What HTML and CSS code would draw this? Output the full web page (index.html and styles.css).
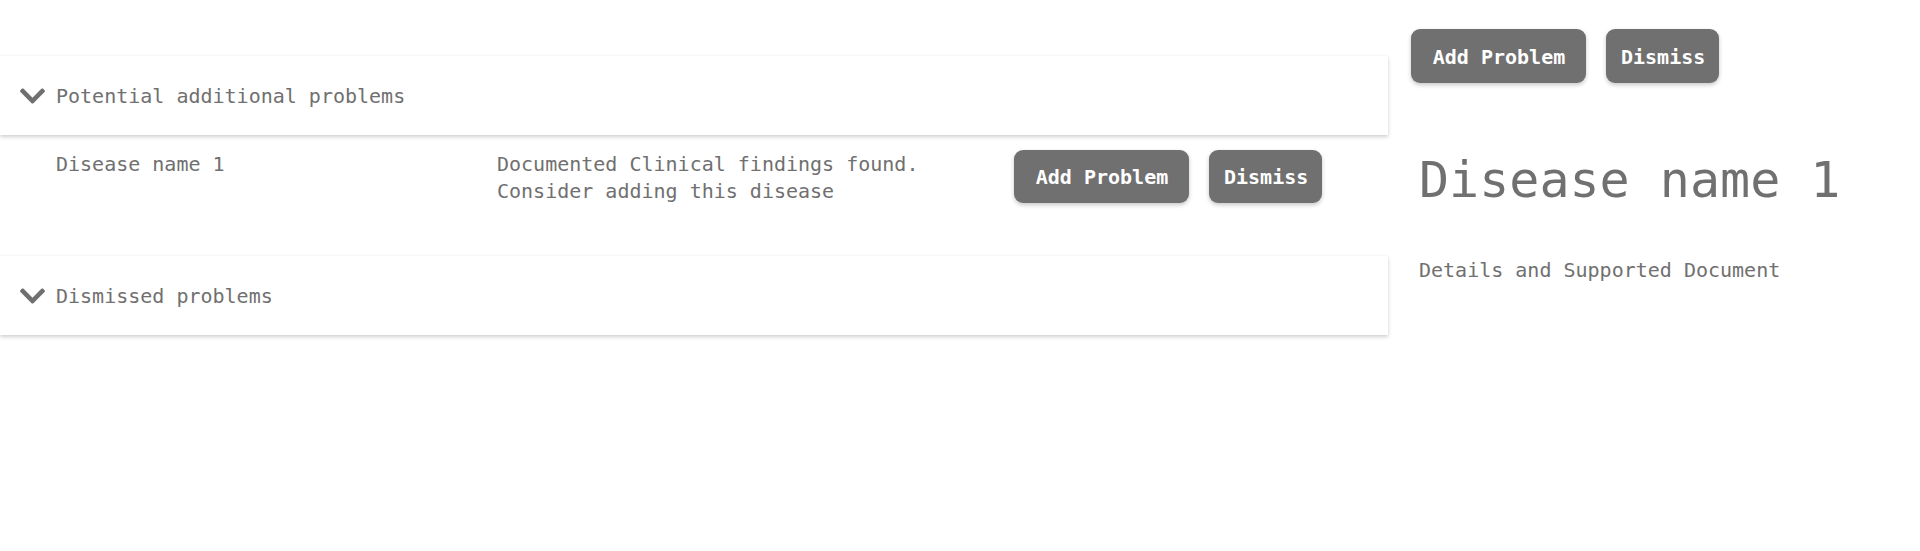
FILE: index.html
```html
<!DOCTYPE html>
<html lang="en">
<head>
<meta charset="utf-8">
<title>Problems</title>
<link rel="stylesheet" href="styles.css">
</head>
<body>
<div class="page">
  <main class="list">
    <section class="panel">
      <svg class="chev" viewBox="5 125 438 262" aria-hidden="true"><path d="M207.029 381.476L12.686 187.132c-9.373-9.373-9.373-24.569 0-33.941l22.667-22.667c9.357-9.357 24.522-9.375 33.901-.04L224 284.505l154.745-154.021c9.379-9.335 24.544-9.317 33.901.04l22.667 22.667c9.373 9.373 9.373 24.569 0 33.941L240.971 381.476c-9.373 9.372-24.569 9.372-33.942 0z"/></svg>
      <span class="panel-title">Potential additional problems</span>
    </section>
    <div class="row">
      <div class="row-name">Disease name 1</div>
      <div class="row-desc">Documented Clinical findings found.<br>Consider adding this disease</div>
      <div class="actions">
        <button class="btn btn-add">Add Problem</button>
        <button class="btn">Dismiss</button>
      </div>
    </div>
    <section class="panel">
      <svg class="chev" viewBox="5 125 438 262" aria-hidden="true"><path d="M207.029 381.476L12.686 187.132c-9.373-9.373-9.373-24.569 0-33.941l22.667-22.667c9.357-9.357 24.522-9.375 33.901-.04L224 284.505l154.745-154.021c9.379-9.335 24.544-9.317 33.901.04l22.667 22.667c9.373 9.373 9.373 24.569 0 33.941L240.971 381.476c-9.373 9.372-24.569 9.372-33.942 0z"/></svg>
      <span class="panel-title">Dismissed problems</span>
    </section>
  </main>
  <aside class="detail">
    <div class="actions">
      <button class="btn btn-add">Add Problem</button>
      <button class="btn">Dismiss</button>
    </div>
    <h1 class="detail-title">Disease name 1</h1>
    <p class="detail-text">Details and Supported Document</p>
  </aside>
</div>
</body>
</html>
```

FILE: styles.css
```css
html, body {
  margin: 0;
  padding: 0;
  background: #ffffff;
}

body {
  font-family: "DejaVu Sans Mono", "Liberation Mono", monospace;
  font-size: 20px;
  line-height: 27px;
  color: #707070;
}

.page {
  display: flex;
  align-items: flex-start;
}

.list {
  width: 1388px;
  flex: none;
  padding-top: 56px;
  padding-bottom: 20px;
}

.panel {
  position: relative;
  height: 79px;
  display: flex;
  align-items: center;
  gap: 11px;
  padding-left: 20px;
  padding-top: 1px;
  box-sizing: border-box;
  background: #ffffff;
  box-shadow: 0 2px 4px rgba(0, 0, 0, 0.18), 0 0 3px rgba(0, 0, 0, 0.04);
}

.chev {
  width: 25px;
  height: 16px;
  fill: #707070;
  flex: none;
  margin-top: -1px;
}

.panel-title {
  color: #707070;
}

.row {
  display: flex;
  align-items: flex-start;
  height: 121px;
  box-sizing: border-box;
  padding: 16px 0 0 56px;
}

.row-name {
  width: 441px;
  flex: none;
}

.row-desc {
  width: 517px;
  flex: none;
}

.actions {
  display: flex;
  gap: 20px;
}

.row .actions {
  margin-top: -1px;
}

.btn {
  height: 53px;
  padding: 1px 14px 0 15px;
  border: none;
  border-radius: 9px;
  background: #707070;
  color: #ffffff;
  font-family: "DejaVu Sans Mono", "Liberation Mono", monospace;
  font-size: 20px;
  font-weight: bold;
  box-shadow: 0 2px 4px rgba(0, 0, 0, 0.22);
  cursor: pointer;
}

.btn-add {
  width: 175px;
}

.detail {
  flex: 1;
  padding-left: 23px;
  padding-top: 29px;
}

.detail .btn {
  height: 54px;
}

.detail-title {
  margin: 67px 0 0 0;
  padding-left: 8px;
  font-size: 50px;
  line-height: 60px;
  font-weight: normal;
  color: #707070;
}

.detail-text {
  margin: 47px 0 0 0;
  padding-left: 8px;
}
```
